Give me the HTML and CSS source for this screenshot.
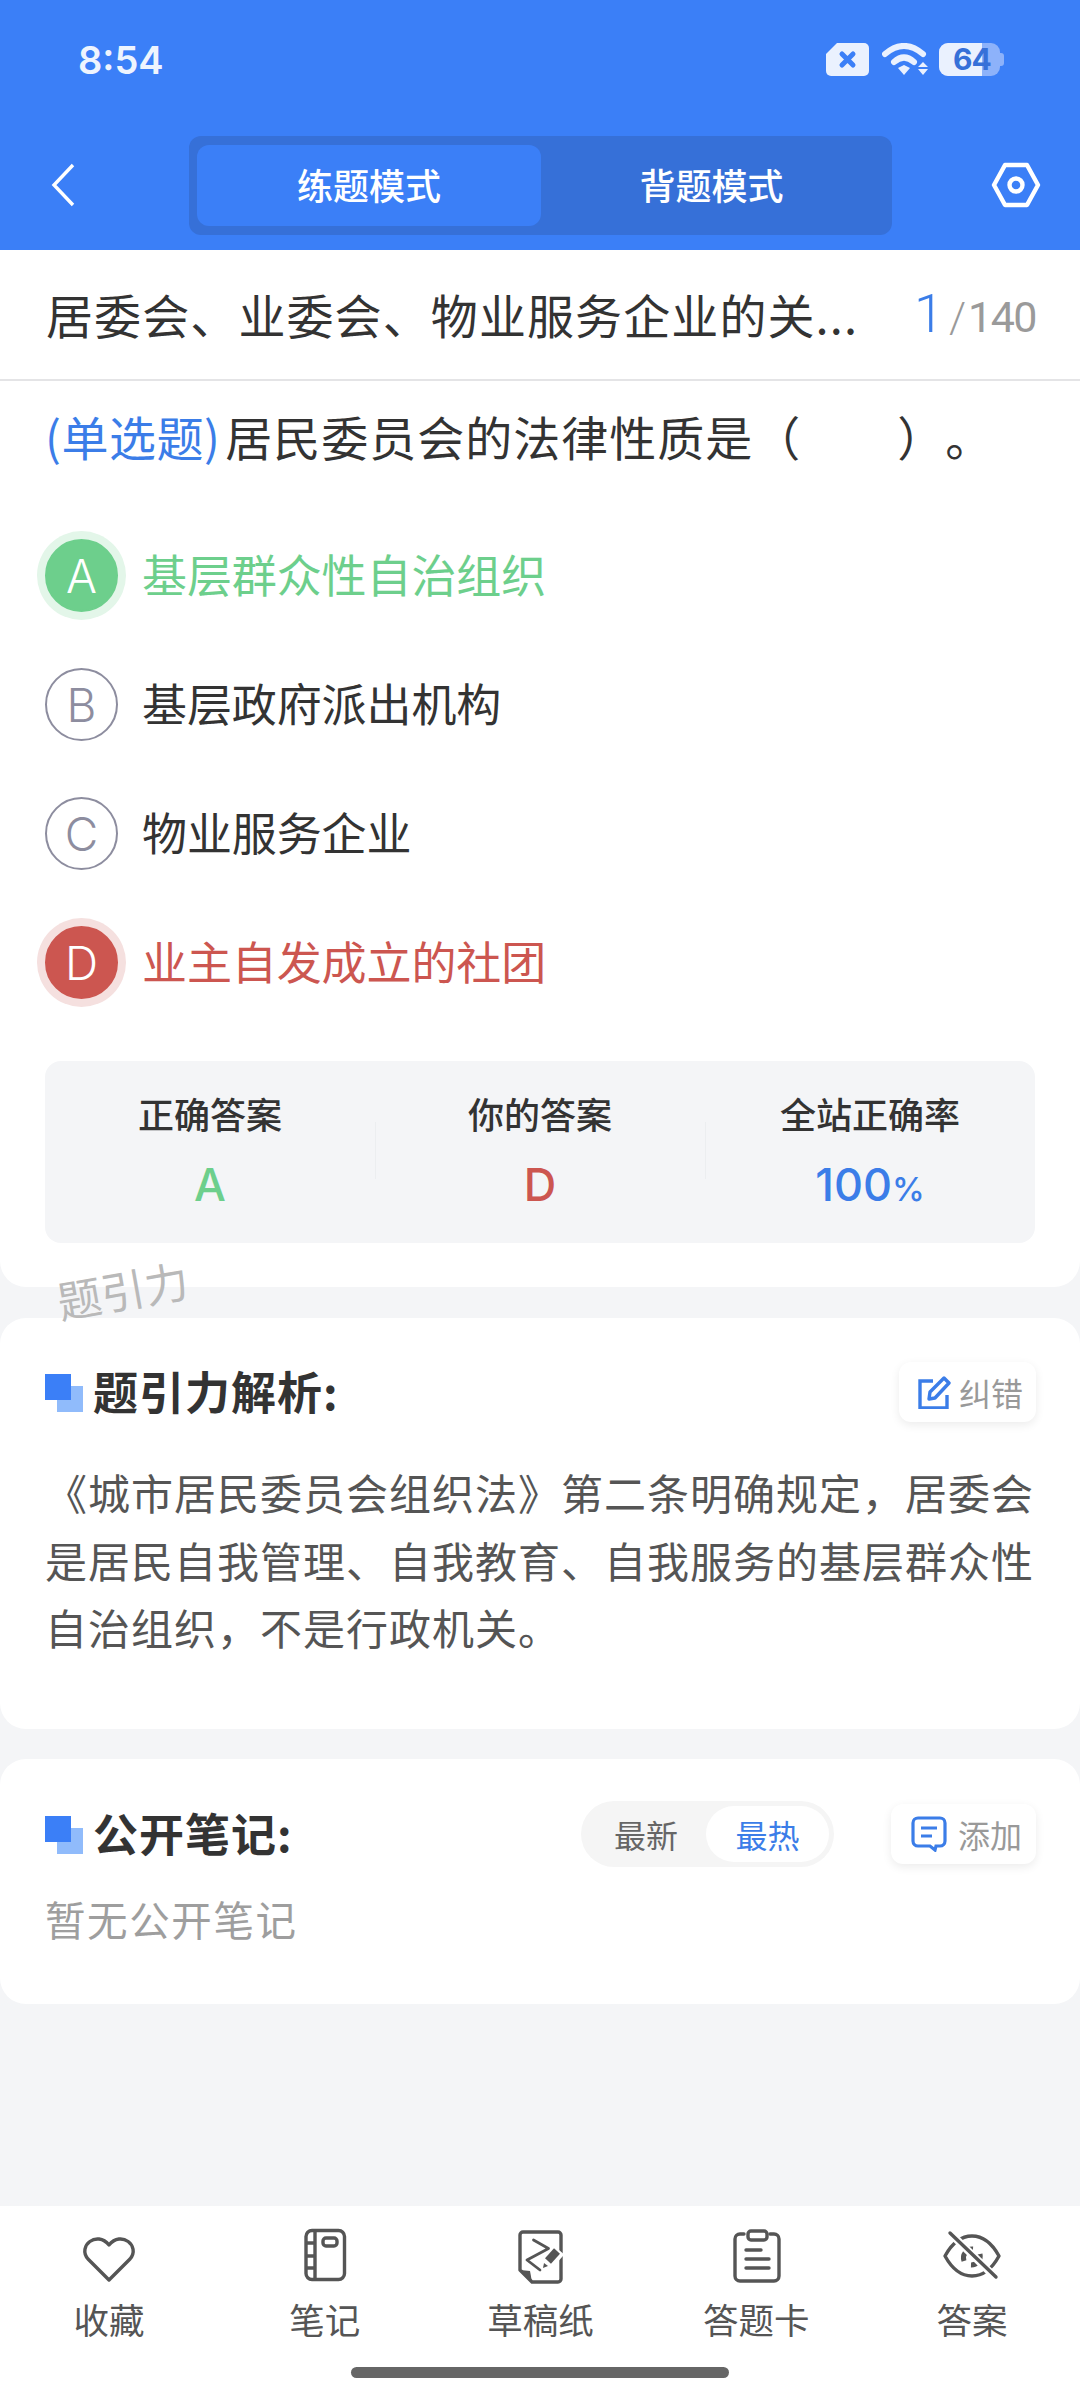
FILE: index.html
```html
<!DOCTYPE html>
<html lang="zh">
<head>
<meta charset="utf-8">
<title>练题模式</title>
<link rel="stylesheet" href="styles.css">
</head>
<body>
<div class="app">
  <header class="top">
    <div class="status">
      <span class="time">8:54</span>
      <div class="status-icons">
        <svg class="ic-sim" viewBox="0 0 43 33"><path d="M11 0h27a5 5 0 0 1 5 5v23a5 5 0 0 1-5 5H5a5 5 0 0 1-5-5V11z" fill="#eaf1fe"/><path d="M16 11l11 11M27 11L16 22" stroke="#3b7ff7" stroke-width="5" stroke-linecap="round"/></svg>
        <svg class="ic-wifi" viewBox="0 0 46 33"><path d="M3 11Q22-5 41 11" fill="none" stroke="#eaf1fe" stroke-width="6" stroke-linecap="round"/><path d="M12 19Q22 10 32 19" fill="none" stroke="#eaf1fe" stroke-width="6" stroke-linecap="round"/><path d="M16 25l6-3 6 3-6 7z" fill="#eaf1fe"/><path d="M36 24l5-5 5 5zM36 26h10l-5 6z" fill="#eaf1fe"/></svg>
        <div class="battery"><div class="battery-fill"></div><span class="battery-text">64</span></div>
      </div>
    </div>
    <nav class="nav">
      <svg class="ic-back" viewBox="0 0 26 44"><path d="M23 2L4 22l19 20" fill="none" stroke="#fff" stroke-width="3.4"/></svg>
      <div class="mode">
        <div class="mode-item active">练题模式</div>
        <div class="mode-item">背题模式</div>
      </div>
      <svg class="ic-gear" viewBox="0 0 50 46"><path d="M14 3h22l11 20-11 20H14L3 23z" fill="none" stroke="#fff" stroke-width="4.4" stroke-linejoin="round"/><circle cx="25" cy="23" r="6.5" fill="none" stroke="#fff" stroke-width="4.4"/></svg>
    </nav>
  </header>

  <main class="content">
    <section class="question-card">
      <div class="title-row">
        <div class="title">居委会、业委会、物业服务企业的关...</div>
        <div class="count"><span class="count-now">1</span><span class="count-sep">/</span><span class="count-total">140</span></div>
      </div>
      <div class="question"><span class="q-type">(单选题)</span>居民委员会的法律性质是（　　）。</div>
      <div class="options">
        <div class="option ok"><span class="letter">A</span><span class="option-text">基层群众性自治组织</span></div>
        <div class="option"><span class="letter">B</span><span class="option-text">基层政府派出机构</span></div>
        <div class="option"><span class="letter">C</span><span class="option-text">物业服务企业</span></div>
        <div class="option bad"><span class="letter">D</span><span class="option-text">业主自发成立的社团</span></div>
      </div>
      <div class="stats">
        <div class="stat"><div class="stat-label">正确答案</div><div class="stat-value green">A</div></div>
        <div class="stat"><div class="stat-label">你的答案</div><div class="stat-value red">D</div></div>
        <div class="stat"><div class="stat-label">全站正确率</div><div class="stat-value blue">100<small>%</small></div></div>
      </div>
    </section>
    <div class="watermark">题引力</div>

    <section class="card analysis">
      <div class="card-head">
        <span class="mark"></span>
        <h2>题引力解析:</h2>
        <div class="chip">
          <svg viewBox="0 0 34 34"><path d="M16 6H3v27h27V20" fill="none" stroke="#3b7de8" stroke-width="3.4"/><path d="M12 24l1-7L27 3l5 5-14 15z" fill="none" stroke="#3b7de8" stroke-width="3.4" stroke-linejoin="round"/></svg>
          <span>纠错</span>
        </div>
      </div>
      <p class="analysis-text">《城市居民委员会组织法》第二条明确规定，居委会是居民自我管理、自我教育、自我服务的基层群众性自治组织，不是行政机关。</p>
    </section>

    <section class="card notes">
      <div class="card-head">
        <span class="mark"></span>
        <h2>公开笔记:</h2>
        <div class="seg"><span class="seg-item">最新</span><span class="seg-item on">最热</span></div>
        <div class="chip">
          <svg viewBox="0 0 36 36"><path d="M7 2h22a5 5 0 0 1 5 5v18a5 5 0 0 1-5 5h-4l-1 4-5-4H7a5 5 0 0 1-5-5V7a5 5 0 0 1 5-5z" fill="none" stroke="#3b7de8" stroke-width="3.2"/><path d="M10 12h16M10 20h11" stroke="#3b7de8" stroke-width="3.2"/></svg>
          <span>添加</span>
        </div>
      </div>
      <div class="empty">暂无公开笔记</div>
    </section>
  </main>

  <footer class="tabbar">
    <div class="tabs">
      <div class="tab">
        <svg viewBox="0 0 60 60"><path d="M30 52L9 31C-2 18 18 2 30 17 42 2 62 18 51 31z" fill="none" stroke="#555" stroke-width="3.4" stroke-linejoin="round"/></svg>
        <span>收藏</span>
      </div>
      <div class="tab">
        <svg viewBox="0 0 60 60"><rect x="11" y="2.5" width="38.5" height="49" rx="6" fill="none" stroke="#555" stroke-width="3.4"/><path d="M20 2.5v49M11 15h9M11 28h9M11 40h9" fill="none" stroke="#555" stroke-width="3.4"/><rect x="28" y="10" width="14" height="8" rx="3" fill="none" stroke="#555" stroke-width="3.4"/></svg>
        <span>笔记</span>
      </div>
      <div class="tab">
        <svg viewBox="0 0 60 60"><path d="M10 42V7a3 3 0 0 1 3-3h35a3 3 0 0 1 3 3v44a3 3 0 0 1-3 3H22z" fill="none" stroke="#555" stroke-width="3.4" stroke-linejoin="round"/><path d="M10 42l10 1 2 11z" fill="#555"/><path d="M23.5 12l15 8.5-21.5 11.5 13 10" fill="none" stroke="#555" stroke-width="2.8" stroke-linejoin="round" stroke-linecap="round"/><path d="M35 38l14-16" stroke="#fff" stroke-width="14"/><path d="M38 33l9-10" stroke="#555" stroke-width="8"/><path d="M33 40l1-5 4 3z" fill="#555"/></svg>
        <span>草稿纸</span>
      </div>
      <div class="tab">
        <svg viewBox="0 0 60 60"><path d="M18 6h-4a5 5 0 0 0-5 5v37a5 5 0 0 0 5 5h34a5 5 0 0 0 5-5V11a5 5 0 0 0-5-5h-4" fill="none" stroke="#555" stroke-width="3.4" stroke-linecap="round"/><rect x="22" y="3" width="19" height="9" rx="3" fill="none" stroke="#555" stroke-width="3.4"/><path d="M20 22h15M20 31h23M20 40h23" stroke="#555" stroke-width="3.4" stroke-linecap="round"/></svg>
        <span>答题卡</span>
      </div>
      <div class="tab">
        <svg viewBox="0 0 60 60"><path d="M3 28Q14 8 30 8t27 20Q46 48 30 48T3 28z" fill="none" stroke="#555" stroke-width="3.4" stroke-linejoin="round"/><path d="M22 33a9 9 0 0 1 9-12M38 26a9 9 0 0 1-9 11" fill="none" stroke="#555" stroke-width="5"/><path d="M8 5l46 45" stroke="#fff" stroke-width="8"/><path d="M8 5l46 44" stroke="#555" stroke-width="3.4" stroke-linecap="round"/></svg>
        <span>答案</span>
      </div>
    </div>
    <div class="home-bar"></div>
  </footer>
</div>
</body>
</html>
```
FILE: styles.css
```css
* { box-sizing: border-box; }
html, body { margin: 0; padding: 0; }
body {
  width: 1080px;
  height: 2400px;
  background: #f4f5f7;
  font-family: "Noto Sans CJK SC", "Noto Sans", sans-serif;
  color: #333;
  overflow: hidden;
  text-spacing-trim: space-all;
}
.app { height: 2400px; display: flex; flex-direction: column; }

.top { height: 250px; background: #3b7ff7; flex: none; }
.status { height: 120px; padding: 36px 0 0 78px; display: flex; justify-content: space-between; align-items: flex-start; }
.time { font-family: Inter, sans-serif; font-weight: 600; font-size: 38px; line-height: 48px; color: #eef4fe; }
.status-icons { display: flex; align-items: center; margin-top: 7px; margin-right: 80px; margin-left: auto; }
.ic-sim { width: 43px; height: 33px; }
.ic-wifi { width: 46px; height: 33px; margin: 0 11px 0 13px; }
.battery { position: relative; width: 61px; height: 33px; background: #8db2fa; border-radius: 9px; }
.battery::after { content: ""; position: absolute; right: -4px; top: 10px; width: 4px; height: 13px; background: #8db2fa; border-radius: 0 3px 3px 0; }
.battery-fill { width: 43px; height: 33px; background: #eaf1fe; border-radius: 9px 0 0 9px; }
.battery-text { position: absolute; left: 14px; top: 0; font-family: Inter, sans-serif; font-weight: 700; font-size: 30px; line-height: 33px; letter-spacing: -1px; color: #3670d8; }

.nav { height: 99px; padding: 0 24px 0 50px; display: flex; align-items: center; margin-top: 16px; }
.ic-back { width: 26px; height: 44px; flex: none; margin-top: -2px; }
.mode { width: 703px; height: 99px; margin-left: 113px; padding: 9px 8px; background: #3670d8; border-radius: 12px; display: flex; flex: none; }
.mode-item { flex: 1; display: flex; align-items: center; justify-content: center; color: #fff; font-size: 36px; font-weight: 500; border-radius: 12px; padding: 0 2px 4px 0; }
.mode-item.active { background: #3b7ff7; flex: none; width: 344px; padding-right: 0; }
.ic-gear { width: 50px; height: 46px; flex: none; margin-left: 99px; margin-top: -2px; }

.content { flex: 1; position: relative; }
.question-card { background: #fff; border-radius: 0 0 26px 26px; height: 1037px; }
.title-row { height: 131px; border-bottom: 2px solid #e4e4e6; display: flex; justify-content: space-between; align-items: center; padding: 0 44px 0 46px; }
.title { font-size: 47px; letter-spacing: 1.1px; color: #333; white-space: nowrap; margin-top: -2px; }
.count { font-family: Roboto, sans-serif; font-size: 43px; color: #9a9a9a; font-weight: 400; display: flex; align-items: baseline; margin-top: -2px; }
.count-now { color: #3b7de8; font-size: 54px; font-weight: 300; letter-spacing: -3px; }
.count-sep { margin: 0 2px 0 8px; font-weight: 300; }
.count-total { letter-spacing: -1.5px; }
.question { padding: 15px 45px 0; font-size: 47px; line-height: 80px; letter-spacing: 1px; color: #333; white-space: nowrap; }
.q-type { color: #3b7de8; margin-right: 5px; letter-spacing: 0.5px; }
.options { margin-top: 63px; display: flex; flex-direction: column; gap: 56px; padding-left: 45px; }
.option { height: 73px; display: flex; align-items: center; gap: 24px; font-size: 45px; letter-spacing: -0.1px; color: #333; }
.option-text { padding-bottom: 4px; }
.letter { width: 73px; height: 73px; flex: none; border-radius: 50%; border: 2px solid #8d8d9f; color: #8d8d9f; font-family: Inter, sans-serif; font-size: 46px; font-weight: 300; display: flex; align-items: center; justify-content: center; }
.ok { color: #6dcf8c; }
.ok .letter { background: #6dcf8c; border-color: #6dcf8c; color: #fff; box-shadow: 0 0 0 8px #e3f6e9; }
.bad { color: #cc5650; }
.bad .letter { background: #cc5650; border-color: #cc5650; color: #fff; box-shadow: 0 0 0 8px #f5e0df; }
.stats { margin: 62px 45px 0; height: 182px; background: #f4f5f7; border-radius: 16px; display: flex; align-items: flex-start; padding-top: 30px; }
.stat { flex: 1; text-align: center; position: relative; }
.stat + .stat::before { content: ""; position: absolute; left: 0; top: 31px; height: 57px; width: 1px; background: #eceef0; }
.stat-label { font-size: 36px; line-height: 44px; font-weight: 500; color: #333; }
.stat-value { font-family: Inter, sans-serif; font-size: 45px; line-height: 54px; margin-top: 23px; font-weight: 500; }
.stat-value small { font-size: 33px; }
.green { color: #6dcf8c; }
.red { color: #cc5650; }
.blue { color: #3b7de8; }

.watermark { position: absolute; left: 63px; top: 1018px; font-size: 44px; color: #b9b9b9; transform: rotate(-10deg); transform-origin: left bottom; }

.card { background: #fff; border-radius: 26px; }
.analysis { margin-top: 31px; height: 411px; padding: 44px 44px 0 45px; }
.notes { margin-top: 30px; height: 245px; padding: 45px 44px 0 45px; }
.card-head { display: flex; align-items: center; height: 60px; }
.mark { width: 38px; height: 38px; flex: none; background: linear-gradient(#3b7ff7, #3b7ff7) left top / 26px 26px no-repeat, linear-gradient(#90bbfb, #90bbfb) right bottom / 26px 26px no-repeat; margin-right: 10px; margin-top: 1px; }
.card-head h2 { margin: -3px auto 0 0; font-size: 45px; font-weight: 700; letter-spacing: 1px; color: #333; }
.chip { width: 137px; height: 60px; flex: none; background: #fff; border-radius: 12px; box-shadow: 0 3px 10px rgba(0, 0, 0, 0.08); display: flex; align-items: center; justify-content: flex-start; padding-left: 18px; gap: 8px; color: #999; font-size: 32px; }
.chip svg { width: 34px; height: 34px; flex: none; }
.analysis-text { margin: 36px 0 0; font-size: 42px; line-height: 67.5px; color: #555; letter-spacing: 1px; }
.seg { width: 253px; height: 66px; flex: none; background: #f5f5f5; border-radius: 33px; display: flex; padding: 5px; margin-right: 57px; }
.seg-item { flex: 1; display: flex; align-items: center; justify-content: center; font-size: 32px; color: #666; }
.seg-item:first-child { flex: none; width: 120px; }
.seg-item.on { background: #fff; color: #3b7de8; border-radius: 30px; }
.notes .chip { width: 145px; padding-left: 20px; gap: 11px; }
.notes .chip svg { width: 36px; height: 36px; }
.empty { margin-top: 25px; font-size: 40.5px; line-height: 60px; color: #9e9e9e; letter-spacing: 1.6px; }

.tabbar { height: 194px; flex: none; background: #fff; position: relative; }
.tabs { display: flex; padding: 0 0 0 1px; height: 150px; }
.tab { flex: 1; display: flex; flex-direction: column; align-items: center; padding-top: 22px; color: #555; font-size: 35.5px; line-height: 44px; }
.tab svg { width: 60px; height: 60px; margin-bottom: 9px; }
.home-bar { position: absolute; left: 351px; bottom: 22px; width: 378px; height: 11px; background: #666; border-radius: 6px; }
```
